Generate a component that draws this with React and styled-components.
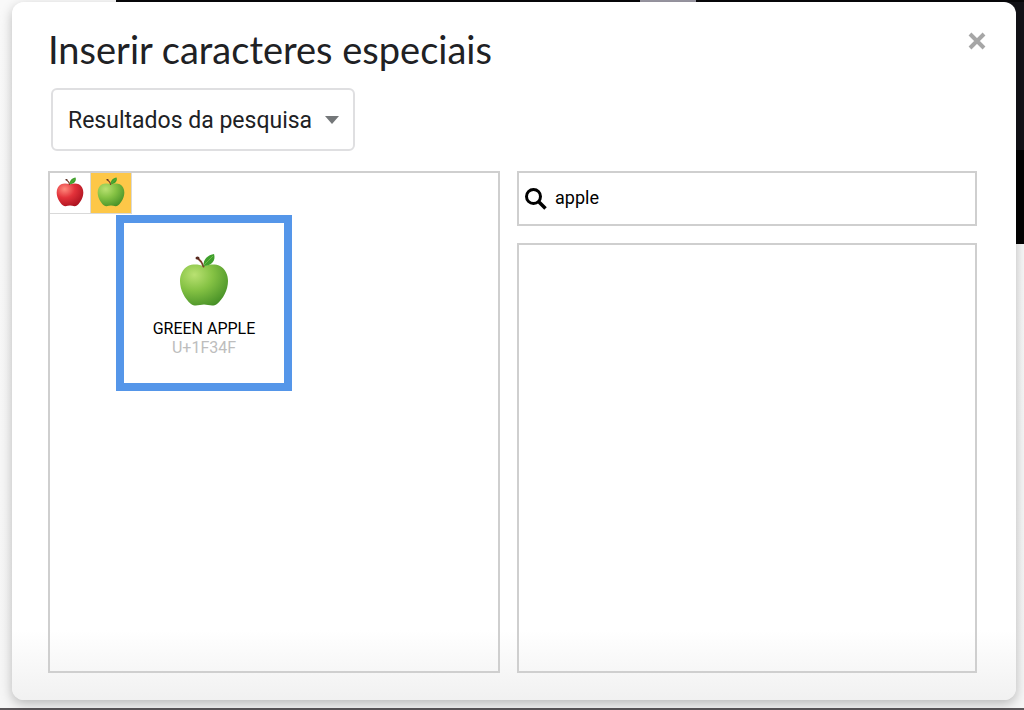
import React, { useState } from "react";
import styled, { createGlobalStyle } from "styled-components";

const GlobalStyle = createGlobalStyle`
  *, *::before, *::after { box-sizing: border-box; }
  body {
    margin: 0;
    font-family: Roboto, "Liberation Sans", sans-serif;
    color: #202124;
  }
`;

const Page = styled.div`
  display: flex;
  min-height: 100vh;
  padding: 2px 8px 8px 12px;
  border-bottom: 2px solid #5b575a;
  background:
    linear-gradient(#9c99a5, #9c99a5) 640px 0 / 56px 2px no-repeat,
    linear-gradient(#08080a, #08080a) 116px 0 / 100% 2px no-repeat,
    linear-gradient(#131318 150px, #030303 150px) 100% 0 / 48px 244px no-repeat,
    linear-gradient(#f9f9f9, #f6f6f6);
`;

const Dialog = styled.main`
  flex: 1;
  display: flex;
  flex-direction: column;
  min-width: 0;
  padding: 24px 39px 27px 36px;
  border-radius: 12px;
  background: linear-gradient(#fff calc(100% - 70px), #f1f1f1);
  box-shadow: 0 4px 12px rgba(0, 0, 0, 0.25);
`;

const Header = styled.header`
  display: flex;
  justify-content: space-between;
  align-items: flex-start;
`;

const Title = styled.h1`
  margin: 0;
  font-family: Lato, "Liberation Sans", sans-serif;
  font-size: 38px;
  font-weight: 400;
  line-height: 46px;
`;

const CloseButton = styled.button`
  display: flex;
  padding: 6px;
  margin-right: -15px;
  border: 0;
  background: none;
  cursor: pointer;
`;

const CategoryPicker = styled.label`
  display: grid;
  align-self: flex-start;
  align-items: center;
  margin: 16px 0 20px 3px;
`;

const CategorySelect = styled.select`
  grid-area: 1 / 1;
  width: 304px;
  height: 63px;
  padding: 2px 32px 0 15px;
  border: 2px solid #dfdfe1;
  border-radius: 6px;
  appearance: none;
  background: #fff;
  color: inherit;
  font: 23px Roboto, "Liberation Sans", sans-serif;
`;

const Caret = styled.svg`
  grid-area: 1 / 1;
  justify-self: end;
  margin-right: 16px;
  pointer-events: none;
`;

const Columns = styled.div`
  flex: 1;
  display: grid;
  grid-template-columns: 452fr 460fr;
  gap: 17px;
`;

const Panel = styled.section`
  position: relative;
  flex: 1;
  border: 2px solid #cfcfcf;
`;

const SearchColumn = styled.div`
  display: flex;
  flex-direction: column;
  gap: 17px;
`;

const SearchBox = styled.label`
  display: flex;
  align-items: center;
  gap: 8px;
  height: 55px;
  padding: 0 6px;
  border: 2px solid #cfcfcf;
`;

const SearchInput = styled.input`
  flex: 1;
  min-width: 0;
  padding: 0 0 2px;
  border: 0;
  outline: 0;
  background: none;
  color: #000;
  font: 18px Roboto, "Liberation Sans", sans-serif;
`;

const Results = styled.div`
  display: flex;
`;

const Cell = styled.button`
  display: flex;
  align-items: center;
  justify-content: center;
  width: 41px;
  height: 41px;
  padding: 0 0 2px;
  border: solid #d9d9d9;
  border-width: 0 1px 1px 0;
  background: ${(p) => (p.$active ? "#fdc748" : "transparent")};
`;

const Preview = styled.div`
  position: absolute;
  top: 42px;
  left: 66px;
  display: flex;
  flex-direction: column;
  align-items: center;
  width: 176px;
  height: 176px;
  padding-top: 30px;
  border: 8px solid #5596e9;
  background: #fff;
  font-size: 16px;
  line-height: 19px;
`;

const CharName = styled.div`
  margin-top: 12px;
  color: #000;
`;

const CharCode = styled.div`
  color: #bdbdbd;
`;

const palettes = {
  red: ["#ff8a7c", "#e3323a", "#a8101e"],
  green: ["#b9e172", "#85c244", "#458f26"],
};

function Apple({ kind, size, id }) {
  const [light, mid, dark] = palettes[kind];
  return (
    <svg width={size} height={size} viewBox="0 0 54 54" aria-hidden="true">
      <defs>
        <radialGradient id={id} cx="0.3" cy="0.25" r="0.85">
          <stop offset="0" stopColor={light} />
          <stop offset="0.45" stopColor={mid} />
          <stop offset="1" stopColor={dark} />
        </radialGradient>
      </defs>
      <path
        d="M27 13C22 11.500 16 10.500 11 13C5.500 16 3 22 3 28C3 37 8 46 14 51C18 54 23 51.500 27 51.500C31 51.500 36 54 40 51C46 46 51 37 51 28C51 22 48.500 16 43 13C38 10.500 32 11.500 27 13Z"
        fill={`url(#${id})`}
      />
      <path d="M26.500 13.500Q25 8.500 21 5.500" fill="none" stroke="#7a3a2a" strokeWidth="2" strokeLinecap="round" />
      <ellipse cx="20.500" cy="5" rx="2" ry="1.500" fill="#57291f" />
      <path d="M26.500 13C26 6 31 2 37 1C39 7 35 13 26.500 13Z" fill="#3f9f2c" />
      <path d="M27 12Q31 8 36 3" fill="none" stroke="#6cb947" strokeWidth="1" />
    </svg>
  );
}

export default function App() {
  const [query, setQuery] = useState("apple");
  return (
    <>
      <GlobalStyle />
      <Page>
        <Dialog aria-labelledby="dialog-title">
          <Header>
            <Title id="dialog-title">Inserir caracteres especiais</Title>
            <CloseButton type="button" aria-label="Fechar">
              <svg width="18" height="18" viewBox="0 0 18 18" aria-hidden="true">
                <path d="M2 2L16 16M16 2L2 16" stroke="#a6a6a6" strokeWidth="4" />
              </svg>
            </CloseButton>
          </Header>
          <CategoryPicker>
            <CategorySelect aria-label="Categoria">
              <option>Resultados da pesquisa</option>
            </CategorySelect>
            <Caret width="14" height="8" viewBox="0 0 14 8" aria-hidden="true">
              <path d="M0 0H14L7 8Z" fill="#747779" />
            </Caret>
          </CategoryPicker>
          <Columns>
            <Panel aria-label="Resultados">
              <Results>
                <Cell type="button" aria-label="Red apple">
                  <Apple kind="red" size={30} id="apple-red" />
                </Cell>
                <Cell type="button" aria-label="Green apple" $active>
                  <Apple kind="green" size={30} id="apple-green" />
                </Cell>
              </Results>
              <Preview role="tooltip">
                <Apple kind="green" size={54} id="apple-preview" />
                <CharName>GREEN APPLE</CharName>
                <CharCode>U+1F34F</CharCode>
              </Preview>
            </Panel>
            <SearchColumn>
              <SearchBox>
                <svg width="22" height="22" viewBox="0 0 22 22" aria-hidden="true">
                  <circle cx="8.500" cy="8.500" r="7" fill="none" stroke="#000" strokeWidth="3" />
                  <path d="M13.500 13.500L20.500 20.500" stroke="#000" strokeWidth="3.500" />
                </svg>
                <SearchInput
                  aria-label="Pesquisar"
                  value={query}
                  onChange={(e) => setQuery(e.target.value)}
                />
              </SearchBox>
              <Panel aria-label="Desenhar símbolo" />
            </SearchColumn>
          </Columns>
        </Dialog>
      </Page>
    </>
  );
}
